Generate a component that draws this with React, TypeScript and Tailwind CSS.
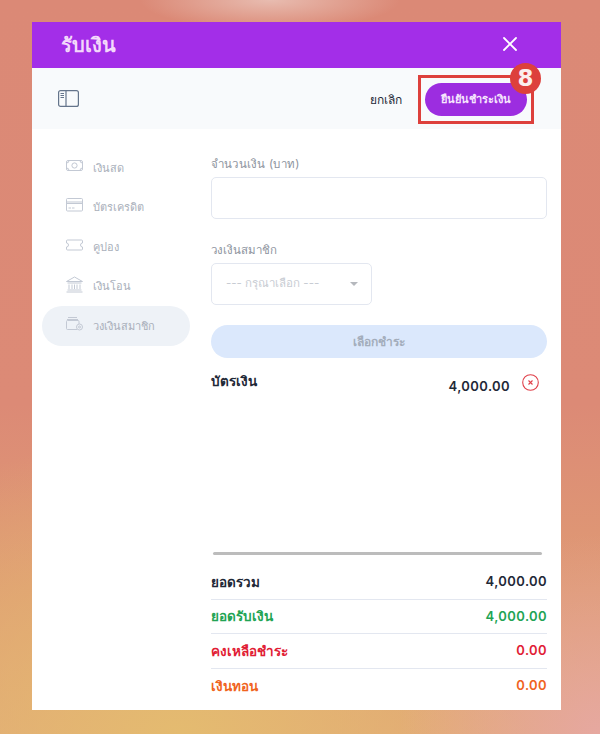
import { X } from "lucide-react";

const thai = "font-['Inter','Noto_Sans','Liberation_Sans',sans-serif]";

function CashIcon() {
  return (
    <svg width="17" height="13" viewBox="0 0 17 13" fill="none" stroke="#c3c9d4" strokeWidth="1">
      <rect x="0.5" y="1.5" width="16" height="10" rx="1.5" />
      <circle cx="8.5" cy="6.5" r="2.6" />
      <path d="M0.5 4a2.5 2.5 0 0 0 2.5-2.5M14 1.5A2.5 2.5 0 0 0 16.5 4M0.5 9A2.5 2.5 0 0 1 3 11.5M14 11.5A2.5 2.5 0 0 1 16.5 9" />
    </svg>
  );
}

function CardIcon() {
  return (
    <svg width="17" height="14" viewBox="0 0 17 14" fill="none" stroke="#c3c9d4" strokeWidth="1">
      <rect x="0.5" y="0.5" width="16" height="12.5" rx="1" />
      <path d="M0.5 4h16M0.5 5.5h16M2.5 10h2.5M6 10h2.5" />
    </svg>
  );
}

function CouponIcon() {
  return (
    <svg width="17" height="12" viewBox="0 0 17 12" fill="none" stroke="#c3c9d4" strokeWidth="1">
      <path d="M1.5 1h14a1 1 0 0 1 1 1v2a2 2 0 0 0 0 4v2a1 1 0 0 1-1 1h-14a1 1 0 0 1-1-1V8a2 2 0 0 0 0-4V2a1 1 0 0 1 1-1z" />
    </svg>
  );
}

function BankIcon() {
  return (
    <svg width="17" height="17" viewBox="0 0 17 17" fill="none" stroke="#c3c9d4" strokeWidth="1">
      <path d="M0.5 5.5 8.5 1l8 4.5zM1.5 7h14M3 8.500v4.500M6 8.500v4.500M8.500 8.500v4.500M11 8.500v4.500M14 8.500v4.500M1.500 14h14M0.500 16h16" />
    </svg>
  );
}

function WalletIcon() {
  return (
    <svg width="17" height="15" viewBox="0 0 17 15" fill="none" stroke="#c3c9d4" strokeWidth="1">
      <path d="M2 1.500h9M1 3.500h11" />
      <path d="M11 13.500H1.500a1 1 0 0 1-1-1v-7a1 1 0 0 1 1-1h10.500a1 1 0 0 1 1 1V8" />
      <circle cx="13.500" cy="11" r="3" />
      <circle cx="13.500" cy="11" r="1" />
    </svg>
  );
}

const methods = [
  { label: "เงินสด", icon: <CashIcon /> },
  { label: "บัตรเครดิต", icon: <CardIcon /> },
  { label: "คูปอง", icon: <CouponIcon /> },
  { label: "เงินโอน", icon: <BankIcon /> },
  { label: "วงเงินสมาชิก", icon: <WalletIcon />, active: true },
];

const totals = [
  { label: "ยอดรวม", value: "4,000.00", color: "text-[#1f2937]" },
  { label: "ยอดรับเงิน", value: "4,000.00", color: "text-[#22a454]" },
  { label: "คงเหลือชำระ", value: "0.00", color: "text-[#e11d35]" },
  { label: "เงินทอน", value: "0.00", color: "text-[#f0641e]" },
];

export default function App() {
  return (
    <div
      className={`${thai} h-[734px] w-[600px] overflow-hidden pt-[22px] pl-[32px] bg-[radial-gradient(ellipse_130px_30px_at_270px_0px,#e8bcb0_0%,#e8bcb000_100%),radial-gradient(ellipse_200px_200px_at_600px_734px,#e6a8a0_0%,#e6a8a000_100%),radial-gradient(ellipse_420px_300px_at_180px_734px,#e4bb70_0%,#e4bb7000_100%),linear-gradient(180deg,#db8976_0%,#dc8a76_55%,#df9a74_80%,#e2a478_100%)]`}
    >
      <div className="relative flex h-[688px] w-[529px] flex-col bg-white">
        <header className="flex h-[46px] items-center justify-between bg-[#a32ee8] pl-[29px] pr-[39px]">
          <h1 className="font-['DejaVu_Sans','Inter',sans-serif] text-[20px] font-semibold text-[#f3d9fb]">รับเงิน</h1>
          <X size={24} strokeWidth={1.8} className="mb-[3px] text-white" />
        </header>

        <div className="flex h-[61px] items-center justify-between bg-[#f8fafc] pl-[26px] pr-[34px]">
          <svg width="21" height="17" viewBox="0 0 21 17" fill="none" stroke="#64748b" strokeWidth="1.2">
            <rect x="0.6" y="0.6" width="19.800" height="15.800" rx="2" />
            <path d="M8 0.6v15.800M2.500 3.500h3.500M2.500 5.500h3.500M2.500 7.500h3.500" />
          </svg>
          <div className="flex translate-y-[1px] items-center">
            <span className="mr-[23px] text-[12px] text-[#1f2937]">ยกเลิก</span>
            <button className="h-[33px] w-[102px] rounded-full bg-[#9c2de0] text-[11px] font-semibold text-[#f6e6fd]">
              ยืนยันชำระเงิน
            </button>
          </div>
        </div>

        {/* callout over the confirm button */}
        <div className="absolute left-[386px] top-[53px] h-[49px] w-[116px] border-[3px] border-[#dd403c]" />
        <div className="absolute left-[478px] top-[41px] flex h-[31px] w-[31px] items-center justify-center rounded-full bg-[#dd403c] font-['DejaVu_Sans',sans-serif] text-[23px] font-bold leading-none text-[#fbeeee]">
          8
        </div>

        <div className="flex min-h-0 flex-1">
          <nav className="flex w-[179px] flex-col pl-[10px] pt-[19px]">
            {methods.map((m) => (
              <div
                key={m.label}
                className={`flex h-[39.500px] w-[148px] items-center rounded-full pl-[24px] ${m.active ? "bg-[#eef2f7]" : ""}`}
              >
                <span className="flex w-[27px] -translate-y-[2px]">{m.icon}</span>
                <span className="text-[11px] text-[#a9afba]">{m.label}</span>
              </div>
            ))}
          </nav>

          <main className="flex w-[336px] flex-col pt-[27px]">
            <label className="text-[11.500px] leading-[16px] tracking-[0.02em] text-[#8d939e]">จำนวนเงิน (บาท)</label>
            <div className="mt-[5px] h-[42px] rounded-[5px] border border-[#e3e7f0]" />

            <label className="mt-[23px] text-[11.500px] leading-[16px] text-[#8d939e]">วงเงินสมาชิก</label>
            <div className="mt-[5px] flex h-[42px] w-[161px] items-center justify-between rounded-[5px] border border-[#e3e7f0] pl-[14px] pr-[13px]">
              <span className="text-[11.500px] text-[#c8ccd3]">--- กรุณาเลือก ---</span>
              <span className="h-0 w-0 border-x-[4px] border-t-[4px] border-x-transparent border-t-[#b5b8bd]" />
            </div>

            <button className="mt-[20px] h-[33px] rounded-full bg-[#dbe8fc] text-[12px] font-semibold text-[#a3adbb]">
              เลือกชำระ
            </button>

            <div className="mt-[13px] flex items-start justify-between pr-[8px]">
              <span className="text-[13.500px] font-semibold leading-[20px] text-[#1f2937]">บัตรเงิน</span>
              <div className="flex items-start">
                <span className="mt-[5px] text-[13px] font-semibold leading-[20px] tracking-[0.03em] text-[#1f2937]">4,000.00</span>
                <svg width="17" height="17" viewBox="0 0 17 17" fill="none" stroke="#e0404a" strokeWidth="1.100" className="ml-[12px] mt-[3px]">
                  <circle cx="8.500" cy="8.500" r="7.800" />
                  <path d="M6.500 6.500l4 4M10.500 6.500l-4 4" />
                </svg>
              </div>
            </div>

            <div className="ml-[2px] mr-[5px] mt-[156px] h-[3px] rounded-full bg-[#bcbcbc]" />

            <div className="mt-[10px] flex flex-col">
              {totals.map((t, i) => (
                <div
                  key={t.label}
                  className={`flex h-[34.500px] items-center justify-between ${i < totals.length - 1 ? "border-b border-[#e3e7f0]" : ""}`}
                >
                  <span className={`text-[13.500px] font-semibold ${t.color}`}>{t.label}</span>
                  <span className={`text-[13px] font-semibold tracking-[0.03em] ${t.color}`}>{t.value}</span>
                </div>
              ))}
            </div>
          </main>
        </div>
      </div>
    </div>
  );
}
